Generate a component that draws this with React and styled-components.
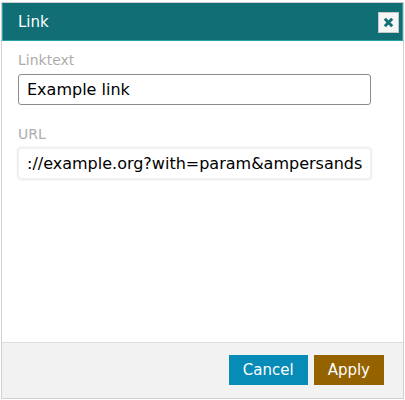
import React from "react";
import styled, { createGlobalStyle } from "styled-components";

const Global = createGlobalStyle`
  html, body {
    margin: 0;
    padding: 0;
    background: #ffffff;
    font-family: "DejaVu Sans", Verdana, sans-serif;
  }
`;

const Pagina = styled.div`
  width: 405px;
  height: 400px;
  padding-top: 2px;
  box-sizing: border-box;
  overflow: hidden;
`;

const Dialogo = styled.div`
  width: 403px;
  height: 397px;
  margin-left: 1px;
  box-sizing: border-box;
  border: 1px solid #d0d0d0;
  background: #ffffff;
  display: flex;
  flex-direction: column;
`;

const Cabecera = styled.div`
  height: 38px;
  box-sizing: border-box;
  background: #126e75;
  border: 1px solid #27a2aa;
  border-top-color: #126e75;
  display: flex;
  align-items: center;
  justify-content: space-between;
  padding: 0 3px 0 15px;
  color: #ffffff;
  font-size: 15px;
`;

const BotonCerrar = styled.button`
  width: 21px;
  height: 21px;
  padding: 0;
  box-sizing: border-box;
  background: #f6f6f6;
  border: 1px solid #c8c8c8;
  display: flex;
  align-items: center;
  justify-content: center;
  margin-top: 1px;
  svg {
    width: 11px;
    height: 11px;
  }
`;

const Cuerpo = styled.div`
  flex: 1;
  padding: 11px 16px 0 16px;
  display: flex;
  flex-direction: column;
`;

const Etiqueta = styled.label`
  display: block;
  font-size: 14px;
  color: #adadad;
  margin-top: ${(p) => (p.$primero ? "0" : "21px")};
  margin-bottom: 6px;
  line-height: 16px;
`;

const Campo = styled.input`
  width: 353px;
  height: 31px;
  box-sizing: border-box;
  padding: 0 8px;
  font-family: "DejaVu Sans", Verdana, sans-serif;
  font-size: 16px;
  color: #000000;
  background: #ffffff;
  border-radius: 3px;
  border: 1px solid ${(p) => (p.$foco ? "#f0f0f0" : "#8c8c8c")};
  box-shadow: ${(p) => (p.$foco ? "0 0 3px rgba(0,0,0,0.18)" : "none")};
  outline: none;
`;

const Pie = styled.div`
  height: 56px;
  box-sizing: border-box;
  background: #f2f2f2;
  border-top: 1px solid #dcdcdc;
  display: flex;
  justify-content: flex-end;
  align-items: flex-start;
  gap: 6px;
  padding: 12px 19px 0 0;
`;

const Boton = styled.button`
  height: 30px;
  padding: 0 14px;
  border: none;
  font-family: "DejaVu Sans", Verdana, sans-serif;
  font-size: 15px;
  color: #ffffff;
  background: ${(p) => p.$color};
`;

const Cerrar = () => (
  <svg viewBox="0 0 12 12">
    <path
      d="M2 2 L10 10 M10 2 L2 10"
      stroke="#126e75"
      strokeWidth="3.2"
      strokeLinecap="butt"
    />
  </svg>
);

const App = () => {
  return (
    <>
      <Global />
      <Pagina>
        <Dialogo>
          <Cabecera>
            <span>Link</span>
            <BotonCerrar aria-label="close">
              <Cerrar />
            </BotonCerrar>
          </Cabecera>
          <Cuerpo>
            <Etiqueta $primero>Linktext</Etiqueta>
            <Campo defaultValue="Example link" />
            <Etiqueta>URL</Etiqueta>
            <Campo $foco defaultValue="://example.org?with=param&ampersands" />
          </Cuerpo>
          <Pie>
            <Boton $color="#078bb7">Cancel</Boton>
            <Boton $color="#946300">Apply</Boton>
          </Pie>
        </Dialogo>
      </Pagina>
    </>
  );
};

export default App;
